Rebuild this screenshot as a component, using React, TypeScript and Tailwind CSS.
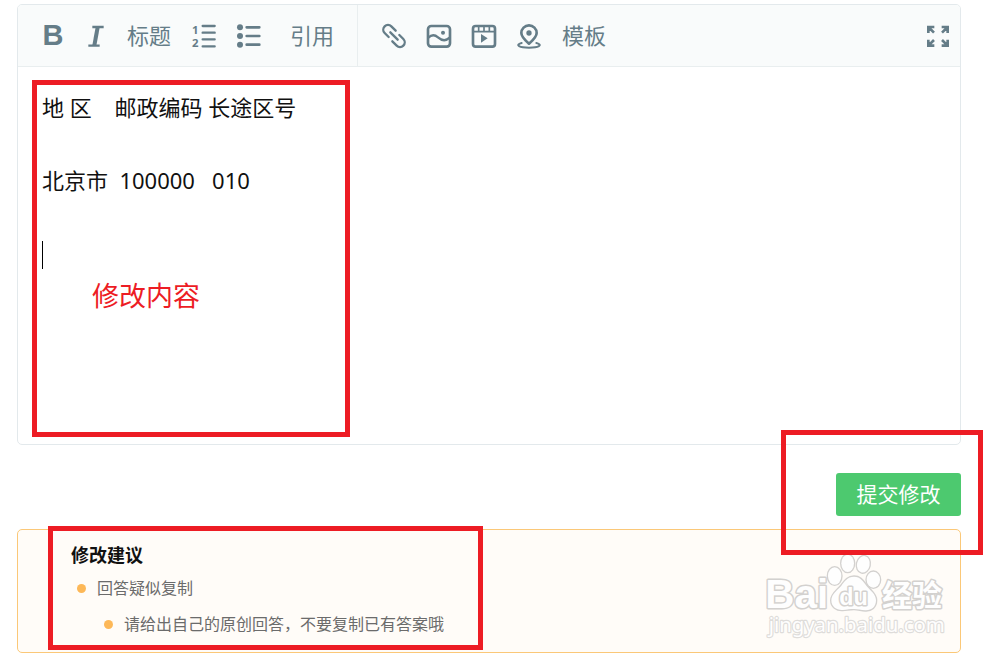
import { useState } from "react";
import type { ReactNode } from "react";

const INITIAL_TEXT = "地 区    邮政编码 长途区号\n北京市  100000   010\n";

const Icon = ({ children }: { children: ReactNode }) => (
  <svg viewBox="0 0 72 72" className="w-6 h-6 overflow-visible" fill="none" stroke="currentColor" strokeWidth={8} strokeLinecap="round" strokeLinejoin="round">
    {children}
  </svg>
);

const ToolButton = ({ label, className = "w-6", children }: { label: string; className?: string; children: ReactNode }) => (
  <button type="button" aria-label={label} className={`h-8 shrink-0 flex items-center justify-center whitespace-nowrap hover:text-[#3f5560] ${className}`}>
    {children}
  </button>
);

// Red marker frame laid over the page
const Marker = ({ className }: { className: string }) => (
  <div className={`absolute z-10 border-5 border-[#ed1c24] pointer-events-none ${className}`} />
);

const Watermark = () => (
  <svg viewBox="0 0 600 300" className="absolute right-0 bottom-[7px] w-[200px] h-[100px] pointer-events-none" fill="#fefefe" stroke="#d3d1cf" strokeWidth={9} strokeLinejoin="round" paintOrder="stroke">
    <text x="16" y="190" fontSize="121" fontWeight="bold" fontFamily="Liberation Sans, sans-serif">Bai</text>
    <g strokeWidth={8}>
      <ellipse cx="224" cy="93" rx="20" ry="26" />
      <ellipse cx="263" cy="55" rx="19" ry="26" />
      <ellipse cx="310" cy="58" rx="19" ry="25" transform="rotate(12 310 58)" />
      <ellipse cx="340" cy="104" rx="20" ry="24" />
      <path d="M282 95c-20 0-28 14-38 27-12 14-30 25-30 44 0 20 16 30 34 29 14-1 22-3 34-3s20 3 34 4c18 1 32-10 32-30 0-19-17-29-29-44-10-13-17-27-37-27z" />
    </g>
    <text x="238" y="179" fontSize="70" fontWeight="bold" fontFamily="Liberation Sans, sans-serif">du</text>
    <text x="366" y="184" fontSize="90" fontWeight="bold" fontFamily="Noto Sans CJK SC, sans-serif">经验</text>
    <text x="26" y="262" fontSize="61" strokeWidth={7} stroke="#dedcda" fontFamily="Noto Sans, sans-serif">jingyan.baidu.com</text>
  </svg>
);

export default function App() {
  const [text, setText] = useState(INITIAL_TEXT);

  return (
    <main className="relative pt-1 pb-2 pl-[17px] pr-[39px] bg-white font-['Noto_Sans','Noto_Sans_CJK_SC',sans-serif]">
      <section className="border border-[#e3e9ec] rounded-[5px] overflow-hidden">
        <div role="toolbar" className="flex h-[62px] bg-[#f9fbfb] border-b border-[#e9eeef] text-[#657d88] text-[22px]">
          <div className="flex items-center gap-[21px] px-[23px] border-r border-[#e9eeef]">
            <ToolButton label="加粗"><b className="font-['Liberation_Sans',sans-serif] text-[29px]">B</b></ToolButton>
            <ToolButton label="斜体" className="w-5">
              <Icon><path strokeWidth={7} strokeLinecap="butt" d="M25 9h34M13 65h34" /><path strokeWidth={12} strokeLinecap="butt" d="M41 10 31 64" /></Icon>
            </ToolButton>
            <ToolButton label="标题" className="w-11">标题</ToolButton>
            <ToolButton label="有序列表">
              <Icon>
                <path strokeWidth={7} d="M32 6h36M32 26h36M32 46h36M32 67h36" />
                <g fill="currentColor" stroke="none" fontSize="34" fontWeight="bold" fontFamily="Noto Sans, sans-serif">
                  <text x="0" y="29">1</text>
                  <text x="0" y="70">2</text>
                </g>
              </Icon>
            </ToolButton>
            <ToolButton label="无序列表">
              <Icon>
                <path d="M29 10h38M29 36h38M29 62h38" />
                <g fill="currentColor" stroke="none">
                  <circle cx="9" cy="10" r="9" />
                  <circle cx="9" cy="36" r="9" />
                  <circle cx="9" cy="62" r="9" />
                </g>
              </Icon>
            </ToolButton>
            <ToolButton label="引用" className="w-11 ml-2">引用</ToolButton>
          </div>
          <div className="flex flex-1 items-center gap-[21px] pl-6 pr-[10px]">
            <ToolButton label="链接">
              <Icon><path strokeWidth={7} d="M20 39L8 27A14 14 0 0 1 28 7L41 20M52 33L64 45A14 14 0 0 1 44 65L31 52M25 25L47 47" /></Icon>
            </ToolButton>
            <ToolButton label="图片">
              <Icon>
                <rect x="3" y="6" width="66" height="62" rx="10" />
                <path strokeWidth={7} d="M4 41C14 31 23 31 33 40s22 13 35 1" />
                <circle cx="48" cy="26" r="6" fill="currentColor" stroke="none" />
              </Icon>
            </ToolButton>
            <ToolButton label="视频">
              <Icon>
                <rect x="3" y="6" width="66" height="62" rx="8" />
                <path strokeWidth={5} d="M4 23h64M20 8v13M36 8v13M52 8v13" />
                <path d="M27 30v26l20-13z" fill="currentColor" stroke="none" />
              </Icon>
            </ToolButton>
            <ToolButton label="地图">
              <Icon>
                <path d="M36 59C22 47 13 38 13 27a23 23 0 0 1 46 0c0 11-9 20-23 32z" />
                <circle cx="36" cy="27" r="8" fill="currentColor" stroke="none" />
                <path strokeWidth={6} d="M14 57C-8 63 8 71 36 71s44-8 22-14" />
              </Icon>
            </ToolButton>
            <ToolButton label="模板" className="w-11">模板</ToolButton>
            <ToolButton label="全屏" className="w-6 ml-auto">
              <Icon><path strokeLinecap="butt" strokeLinejoin="miter" d="M25 9H7v18M7 9l17 17M47 9h18v18M65 9 48 26M25 65H7V47M7 65l17-17M47 65h18V47M65 65 48 48" /></Icon>
            </ToolButton>
          </div>
        </div>
        <textarea
          aria-label="回答内容"
          rows={5}
          value={text}
          onChange={(e) => setText(e.target.value)}
          className="block w-full resize-none outline-none overflow-hidden pt-1 pb-2 px-6 text-[22px] leading-[73px] text-[#111]"
        />
      </section>

      <Marker className="left-8 top-20 w-[318px] h-[357px]" />
      <span className="absolute left-[42px] top-[241px] w-px h-7 bg-black" />
      <p className="absolute left-[92px] top-[276px] text-[27px] leading-10 text-[#ed1c24]">修改内容</p>

      <div className="relative flex justify-end mt-7">
        <button type="button" className="h-[43px] w-[125px] rounded-[3px] bg-[#4dc96f] text-white text-[21px] hover:bg-[#43b963]">提交修改</button>
        <Marker className="-right-[22px] -top-[43px] w-[202px] h-[125px]" />
      </div>

      <section className="relative mt-[13px] pt-[10px] pb-[10px] pl-[53px] pr-6 border border-[#fbc878] rounded-[5px] bg-[#fffcf8]">
        <h2 className="text-lg leading-[30px] font-bold text-[#111]">修改建议</h2>
        <ul className="pl-[6px] text-base leading-9 text-[#6b6b6b]">
          <li>
            <div className="flex items-center gap-[11px]"><i className="w-[9px] h-[9px] rounded-full bg-[#fdb858]" />回答疑似复制</div>
            <ul className="pl-[27px]">
              <li className="flex items-center gap-[11px]"><i className="w-[9px] h-[9px] rounded-full bg-[#fdb858]" />请给出自己的原创回答，不要复制已有答案哦</li>
            </ul>
          </li>
        </ul>
        <Watermark />
        <Marker className="left-[30px] -top-1 w-[435px] h-[124px]" />
      </section>
    </main>
  );
}
